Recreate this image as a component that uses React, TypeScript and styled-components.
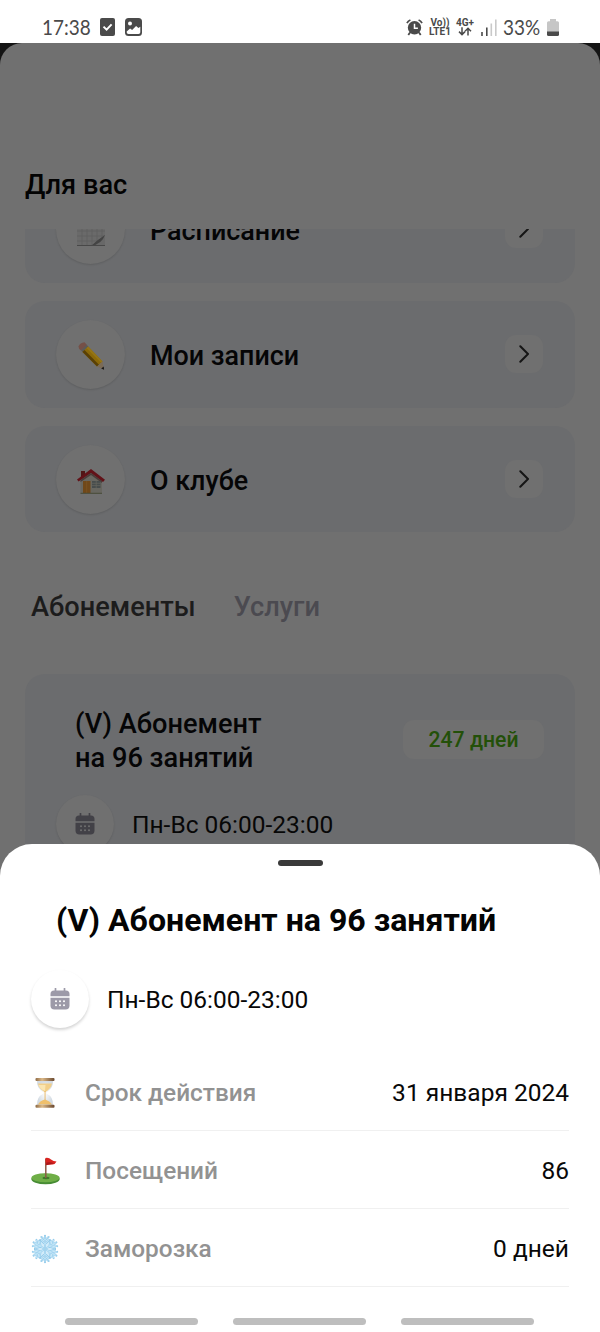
import React from "react";
import styled, { createGlobalStyle } from "styled-components";

const GlobalStyle = createGlobalStyle`
  * { box-sizing: border-box; }
  body { margin: 0; background: #fff; font-family: Roboto, "Liberation Sans", sans-serif; }
  svg { display: block; flex: none; }
`;

const Screen = styled.div`
  position: relative;
  width: 600px;
  height: 1332px;
  display: flex;
  flex-direction: column;
  overflow: hidden;
  background: #141414;
`;

/* ---------- status bar ---------- */

const StatusBar = styled.header`
  flex: none;
  height: 43px;
  padding: 10px 41px 0 42px;
  display: flex;
  justify-content: space-between;
  align-items: flex-start;
  background: #fff;
  color: #4a4a4a;
`;

const StatusGroup = styled.div<{ $gap: number }>`
  display: flex;
  align-items: center;
  gap: ${(p) => p.$gap}px;
  height: 34px;
`;

const StatusText = styled.span<{ $width: number }>`
  width: ${(p) => p.$width}px;
  font-family: Lato, sans-serif;
  font-size: 22px;
  line-height: 34px;
  white-space: nowrap;
  transform: scaleX(0.86);
  transform-origin: left center;
`;

const NetworkLabel = styled.span<{ $width: number; $shift?: number }>`
  width: ${(p) => p.$width}px;
  margin-left: ${(p) => p.$shift ?? 0}px;
  display: flex;
  flex-direction: column;
  align-items: center;
  font-size: 10px;
  font-weight: 700;
  line-height: 9px;
  white-space: nowrap;
`;

/* ---------- dimmed page ---------- */

const Page = styled.main`
  flex: 1;
  min-height: 0;
  display: flex;
  flex-direction: column;
  overflow: hidden;
  border-radius: 22px 22px 0 0;
  background: #707070;
`;

const PageHeader = styled.div`
  flex: none;
  height: 186px;
  padding: 127px 25px 0;
`;

const Heading = styled.h1`
  margin: 0;
  font-size: 27.2px;
  font-weight: 500;
  line-height: 30px;
  color: #030303;
`;

const Scroller = styled.div`
  flex: 1;
  min-height: 0;
  overflow: hidden;
  padding: 0 25px;
`;

const CardList = styled.div`
  display: flex;
  flex-direction: column;
  gap: 18px;
  margin-top: -53px;
`;

const LinkCard = styled.div`
  height: 107px;
  padding: 0 32px 1px 31px;
  display: flex;
  align-items: center;
  border-radius: 20px;
  background: #6b6c6e;

  &:last-child {
    height: 106px;
    padding-bottom: 0;
  }
`;

const RoundIcon = styled.div<{ $size: number; $light?: boolean; $drop?: number }>`
  flex: none;
  width: ${(p) => p.$size}px;
  height: ${(p) => p.$size}px;
  padding-top: ${(p) => p.$drop ?? 0}px;
  display: flex;
  align-items: center;
  justify-content: center;
  border-radius: 50%;
  background: ${(p) => (p.$light ? "#fff" : "#707070")};
  box-shadow: ${(p) => (p.$light ? "0 2px 3px rgba(0,0,0,.17)" : "0 1px 2px rgba(0,0,0,.12)")};
`;

const LinkTitle = styled.span`
  flex: 1;
  margin-left: 25px;
  font-size: 26.9px;
  font-weight: 500;
  line-height: 30px;
  padding-top: 4px;
  color: #050506;
`;

const ArrowBox = styled.div`
  width: 38px;
  height: 38px;
  display: flex;
  align-items: center;
  justify-content: center;
  border-radius: 11px;
  background: #707070;
`;

const Tabs = styled.nav`
  display: flex;
  gap: 38px;
  padding: 60px 6px 0;
`;

const Tab = styled.span<{ $active?: boolean }>`
  font-size: 27.2px;
  font-weight: 500;
  line-height: 30px;
  color: ${(p) => (p.$active ? "#1c1c1c" : "#4b4a50")};
`;

const PassCard = styled.section`
  height: 240px;
  margin-top: 52px;
  padding: 33px 31px 0;
  border-radius: 20px;
  background: #6b6c6e;
`;

const PassTop = styled.div`
  display: flex;
  justify-content: space-between;
  align-items: flex-start;
  padding-left: 19px;
`;

const PassTitle = styled.h2`
  margin: 0;
  font-size: 27.2px;
  font-weight: 500;
  line-height: 34px;
  color: #050506;
`;

const DaysBadge = styled.span`
  width: 141px;
  height: 39px;
  margin-top: 13px;
  border-radius: 11px;
  background: #707070;
  color: #235009;
  font-size: 21.2px;
  font-weight: 500;
  line-height: 39px;
  text-align: center;
`;

const ScheduleRow = styled.div<{ $top: number }>`
  display: flex;
  align-items: center;
  gap: 18px;
  margin-top: ${(p) => p.$top}px;
`;

const ScheduleText = styled.span`
  padding-top: 2px;
  font-size: 24.5px;
  line-height: 30px;
  color: #070707;
`;

/* ---------- bottom sheet ---------- */

const Sheet = styled.section`
  position: absolute;
  left: 0;
  right: 0;
  bottom: 0;
  height: 488px;
  padding: 16px 31px 0;
  display: flex;
  flex-direction: column;
  border-radius: 32px 32px 0 0;
  background: #fff;
`;

const Handle = styled.div`
  align-self: center;
  width: 45px;
  height: 6px;
  border-radius: 3px;
  background: #3a3a3a;
`;

const SheetTitle = styled.h2`
  margin: 34px 0 0 25px;
  font-size: 32.1px;
  font-weight: 700;
  line-height: 40px;
  color: #040404;
  white-space: nowrap;
`;

const Details = styled.div`
  margin-top: 25px;
`;

const DetailRow = styled.div`
  height: 78px;
  padding-top: 1px;
  display: flex;
  align-items: center;
  border-bottom: 1px solid #f0f0f0;
`;

const DetailIcon = styled.div`
  width: 28px;
  height: 33px;
  padding-top: 2px;
  margin-right: 1px;
  display: flex;
  align-items: center;
  justify-content: center;
`;

const DetailLabel = styled.span`
  flex: 1;
  margin-left: 25px;
  padding-top: 1px;
  font-size: 24.4px;
  font-weight: 500;
  line-height: 30px;
  color: #929292;
`;

const DetailValue = styled.span`
  padding-top: 1px;
  font-size: 24.5px;
  line-height: 30px;
  color: #080808;
`;

const NavBars = styled.div`
  display: flex;
  gap: 35px;
  margin: 31px 0 0 34px;
`;

const NavBar = styled.span`
  width: 133px;
  height: 7px;
  border-radius: 4px;
  background: #bebebe;
`;

/* ---------- drawings ---------- */

const CheckBoxIcon = () => (
  <svg width="15" height="18" viewBox="0 0 15 18">
    <rect width="15" height="18" rx="2" fill="#4a4a4a" />
    <path d="M3.500 8.600l3.100 3 5-5.200" fill="none" stroke="#fff" strokeWidth="2" />
  </svg>
);

const PictureIcon = () => (
  <svg width="17" height="18" viewBox="0 0 17 18">
    <rect width="17" height="18" rx="3.500" fill="#4a4a4a" />
    <circle cx="5" cy="5.600" r="2" fill="#fff" />
    <path d="M1.700 13.500l3.400-3.100 2 1.500 4-4 2.300 2 1.900-1.100v5.500a1.800 1.800 0 0 1-1.800 1.800H3.500a1.800 1.800 0 0 1-1.800-1.800z" fill="#fff" />
  </svg>
);

const AlarmIcon = () => (
  <svg width="17" height="17" viewBox="0 0 17 17">
    <circle cx="8.500" cy="8.700" r="6.700" fill="#4a4a4a" />
    <path d="M1 4.200Q2 2 4.400 1M16 4.200Q15 2 12.600 1M4 13.500L2.300 16M13 13.500l1.700 2.500" fill="none" stroke="#4a4a4a" strokeWidth="1.800" />
    <path d="M8.500 4.800v4.400h3.400" fill="none" stroke="#fff" strokeWidth="1.500" />
  </svg>
);

const DataArrows = () => (
  <svg width="14" height="9" viewBox="0 0 14 9">
    <path d="M4 .3v7M1 4.600l3 3 3-3M10 8.500v-7M7 4.200l3-3 3 3" fill="none" stroke="#4a4a4a" strokeWidth="1.500" />
  </svg>
);

const SignalIcon = () => (
  <svg width="16" height="17" viewBox="0 0 16 17">
    <path d="M1 13v4M5.800 8.500V17" stroke="#4a4a4a" strokeWidth="1.600" />
    <path d="M10.300 4.500V17M14.800.500V17" stroke="#c9c9c9" strokeWidth="1.600" />
  </svg>
);

const BatteryIcon = () => (
  <svg width="12" height="17" viewBox="0 0 12 17">
    <path d="M3 0h6v2.300h1.500A1.500 1.500 0 0 1 12 3.800V13H0V3.800a1.500 1.500 0 0 1 1.500-1.500H3z" fill="#c6c6c6" />
    <path d="M0 12.500h12v3a1.500 1.500 0 0 1-1.500 1.500h-9A1.500 1.500 0 0 1 0 15.500z" fill="#4a4a4a" />
  </svg>
);

const ChevronIcon = () => (
  <svg width="12" height="18" viewBox="0 0 12 18">
    <path d="M2.300 1.200L10 9l-7.700 7.800" fill="none" stroke="#151515" strokeWidth="2" strokeLinecap="round" strokeLinejoin="round" />
  </svg>
);

const SheetPageIcon = () => (
  <svg width="28" height="30" viewBox="0 0 28 30">
    <rect width="28" height="30" fill="#6a6a6a" />
    <path d="M0 5h28M0 10h28M0 15h28M0 20h28M0 25h28M5 0v30M10 0v30M15 0v30M20 0v30M25 0v30" stroke="#606060" strokeWidth="1" />
    <path d="M14 30Q22 28 28 19v11z" fill="#686868" />
    <path d="M14 30Q20 24 28 19Q25 28 14 30z" fill="#444" />
    <path d="M0 29.500h28" stroke="#484848" />
  </svg>
);

const PencilIcon = () => (
  <svg width="28" height="30" viewBox="0 0 28 30">
    <path d="M1.500 5.500Q3 1.500 7.500 1.200L10 4 4 9.500Q1.500 8 1.500 5.500z" fill="#755047" />
    <path d="M4 9.200L9.700 3.800 11.300 5.500 5.500 11.200z" fill="#5b5a58" />
    <path d="M5.500 11L11.200 5.400 25.500 20.500 20 25.500z" fill="#8b6908" />
    <path d="M5.500 11l2-2L22 23.800 20 25.500z" fill="#594006" />
    <path d="M9.500 7.200l1.700-1.800L25.500 20.500 24 21.800z" fill="#957515" />
    <path d="M20 25.500l5.500-5L27 28.800z" fill="#7b6b56" />
    <path d="M24.200 27.600l2.500-2.200.4 3.400z" fill="#171717" />
  </svg>
);

const HouseIcon = () => (
  <svg width="28" height="26" viewBox="0 0 28 26">
    <path d="M4 3h4v8H4z" fill="#501717" />
    <path d="M3.500 12L14 3l11 10v12.500H3.500z" fill="#686760" />
    <path d="M14 1L0 11.500l1.500 2L14 5l12 9 2-2.300z" fill="#621218" />
    <path d="M14 5L3.500 12v2L14 7l11 8v-2z" fill="#493c39" />
    <rect x="6" y="13" width="7.500" height="12" fill="#704819" />
    <path d="M9.700 13v12" stroke="#805a28" strokeWidth=".6" />
    <rect x="15" y="13" width="8.500" height="7" fill="#474d4d" />
    <path d="M15 15.300h8.500M15 17.600h8.500M19.200 13v7" stroke="#65665f" strokeWidth=".7" />
    <path d="M3.500 25.300H25" stroke="#484b38" />
  </svg>
);

const CalendarIcon = ({ color, dot }: { color: string; dot: string }) => (
  <svg width="20" height="22" viewBox="0 0 20 22">
    <path d="M5.500.500v4M14.500.500v4" stroke={color} strokeWidth="1.700" strokeLinecap="round" />
    <path d="M.500 8.300V6a3.500 3.500 0 0 1 3.500-3.500h12A3.500 3.500 0 0 1 19.500 6v2.300z" fill={color} />
    <path d="M.500 9.700h19v7.800a4 4 0 0 1-4 4h-11a4 4 0 0 1-4-4z" fill={color} />
    {[13.3, 17.3].map((y) =>
      [6, 10, 14].map((x) => <circle key={`${x}-${y}`} cx={x} cy={y} r="1" fill={dot} />)
    )}
  </svg>
);

const HourglassIcon = () => (
  <svg width="20" height="30" viewBox="0 0 20 30">
    <defs>
      <linearGradient id="brass" x2="1">
        <stop stopColor="#8d6a45" />
        <stop offset=".35" stopColor="#dcb988" />
        <stop offset="1" stopColor="#6a482e" />
      </linearGradient>
      <radialGradient id="glass">
        <stop stopColor="#fff" />
        <stop offset="1" stopColor="#d3dbe3" />
      </radialGradient>
    </defs>
    <path d="M2 3h16q.5 7-6.500 11.500v1Q18.500 19 18 27H2q-.5-8 6.500-11.500v-1Q1.500 10 2 3z" fill="url(#glass)" />
    <path d="M3 5.500h14Q16 11 10.500 14h-1Q4 11 3 5.500z" fill="#f2cf89" />
    <path d="M3.500 7h7l-.5 6Q5 11 3.500 7z" fill="#fae5b1" />
    <path d="M9.600 13h.9v9H9.600z" fill="#e5b460" />
    <path d="M3 26.500Q5 22.500 10 21.500 15 23 17 26.500z" fill="#efc06d" />
    <rect x=".5" y="0" width="19" height="3" rx="1" fill="url(#brass)" />
    <rect x=".5" y="26.700" width="19" height="3" rx="1" fill="url(#brass)" />
  </svg>
);

const GolfIcon = () => (
  <svg width="29" height="28" viewBox="0 0 29 28">
    <ellipse cx="14.500" cy="22" rx="14.200" ry="5.300" fill="#478c34" />
    <ellipse cx="14.500" cy="20.800" rx="14" ry="4.500" fill="#6fae47" />
    <ellipse cx="15" cy="21" rx="3.500" ry="1.200" fill="#3e7828" />
    <path d="M14.800 2v19" stroke="#8b5b45" strokeWidth="1.500" />
    <path d="M14.300 1Q18 .3 20 2.500q2.500 2 5.500 2-1 2.500-4 3-3.500 0-6.700.8z" fill="#d9221f" />
    <path d="M15.500 5.500Q20 4.500 23 6.500L15 8z" fill="#a9191b" />
  </svg>
);

const SnowflakeIcon = () => (
  <svg width="28" height="30" viewBox="-14 -15 28 30">
    <circle r="11" fill="#d3ecfa" />
    {[0, 60, 120, 180, 240, 300].map((a) => (
      <g key={a} transform={`rotate(${a})`} fill="none" strokeLinecap="round">
        <path d="M0 0V-13.200M-3.600-12L0-8.800 3.600-12M-4.500-9L0-5 4.500-9" stroke="#93caea" strokeWidth="2" />
        <path d="M0 0V-12.500M-3.300-11.800L0-9 3.300-11.800M-4-8.800L0-5.200 4-8.800" stroke="#bfe4f7" strokeWidth="1" />
      </g>
    ))}
    <circle r="2" fill="#a5d5ef" />
  </svg>
);

const links = [
  { title: "Расписание", icon: <SheetPageIcon /> },
  { title: "Мои записи", icon: <PencilIcon /> },
  { title: "О клубе", icon: <HouseIcon /> },
];

const details = [
  { label: "Срок действия", value: "31 января 2024", icon: <HourglassIcon /> },
  { label: "Посещений", value: "86", icon: <GolfIcon /> },
  { label: "Заморозка", value: "0 дней", icon: <SnowflakeIcon /> },
];

export default function App() {
  return (
    <>
      <GlobalStyle />
      <Screen>
        <StatusBar>
          <StatusGroup $gap={10}>
            <StatusText $width={48}>17:38</StatusText>
            <CheckBoxIcon />
            <PictureIcon />
          </StatusGroup>
          <StatusGroup $gap={6}>
            <AlarmIcon />
            <NetworkLabel $width={22}>
              <span>Vo))</span>
              <span>LTE1</span>
            </NetworkLabel>
            <NetworkLabel $width={20} $shift={-2}>
              <span>4G+</span>
              <DataArrows />
            </NetworkLabel>
            <SignalIcon />
            <StatusText $width={38}>33%</StatusText>
            <BatteryIcon />
          </StatusGroup>
        </StatusBar>

        <Page>
          <PageHeader>
            <Heading>Для вас</Heading>
          </PageHeader>
          <Scroller>
            <CardList>
              {links.map((l) => (
                <LinkCard key={l.title}>
                  <RoundIcon $size={69} $drop={3}>{l.icon}</RoundIcon>
                  <LinkTitle>{l.title}</LinkTitle>
                  <ArrowBox>
                    <ChevronIcon />
                  </ArrowBox>
                </LinkCard>
              ))}
            </CardList>
            <Tabs>
              <Tab $active>Абонементы</Tab>
              <Tab>Услуги</Tab>
            </Tabs>
            <PassCard>
              <PassTop>
                <PassTitle>
                  (V) Абонемент
                  <br />
                  на 96 занятий
                </PassTitle>
                <DaysBadge>247 дней</DaysBadge>
              </PassTop>
              <ScheduleRow $top={20}>
                <RoundIcon $size={58}>
                  <CalendarIcon color="#424147" dot="#707070" />
                </RoundIcon>
                <ScheduleText>Пн-Вс 06:00-23:00</ScheduleText>
              </ScheduleRow>
            </PassCard>
          </Scroller>
        </Page>

        <Sheet>
          <Handle />
          <SheetTitle>(V) Абонемент на 96 занятий</SheetTitle>
          <ScheduleRow $top={30}>
            <RoundIcon $size={58} $light>
              <CalendarIcon color="#9c9aa8" dot="#fff" />
            </RoundIcon>
            <ScheduleText>Пн-Вс 06:00-23:00</ScheduleText>
          </ScheduleRow>
          <Details>
            {details.map((d) => (
              <DetailRow key={d.label}>
                <DetailIcon>{d.icon}</DetailIcon>
                <DetailLabel>{d.label}</DetailLabel>
                <DetailValue>{d.value}</DetailValue>
              </DetailRow>
            ))}
          </Details>
          <NavBars>
            <NavBar />
            <NavBar />
            <NavBar />
          </NavBars>
        </Sheet>
      </Screen>
    </>
  );
}
